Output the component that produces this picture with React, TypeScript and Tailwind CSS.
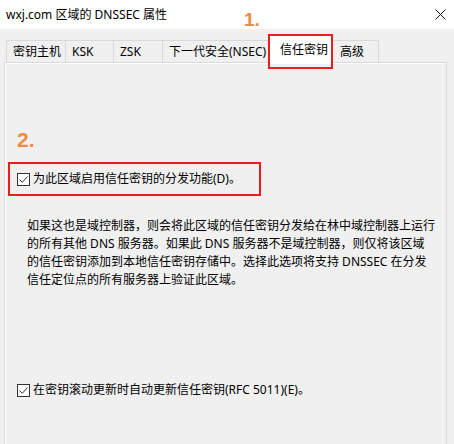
const font = "font-['Noto_Sans','Noto_Sans_CJK_SC',sans-serif]"

function CheckBox() {
  return (
    <span className="flex h-[13px] w-[13px] shrink-0 items-center justify-center border border-[#333] bg-white">
      <svg width="11" height="11" viewBox="0 0 11 11">
        <path d="M1.5 5.5 L4.3 8.3 L9.5 2.5" fill="none" stroke="#333" strokeWidth="1" />
      </svg>
    </span>
  )
}

const tabs = [
  { label: '密钥主机', w: 'w-[59px]' },
  { label: 'KSK', w: 'w-[48px]' },
  { label: 'ZSK', w: 'w-[49px]' },
  { label: '下一代安全(NSEC)', w: 'w-[106px]' },
]

export default function App() {
  return (
    <div className={`relative h-[444px] w-[454px] overflow-hidden bg-[#f0f0f0] text-[12px] text-black ${font}`}>
      {/* title bar */}
      <div className="flex h-[29px] items-center justify-between bg-white pl-[6px] pr-[8px]">
        <span className="leading-[16px]">wxj.com 区域的 DNSSEC 属性</span>
        <svg width="11" height="11" viewBox="0 0 11 11" className="mb-[1px]">
          <path d="M0.5 0.5 L10.5 10.5 M10.5 0.5 L0.5 10.5" stroke="#111" strokeWidth="1" />
        </svg>
      </div>

      {/* tabs */}
      <div className="relative z-10 -mb-px flex items-end pl-[6px] pt-[6px]">
        {tabs.map((t) => (
          <div
            key={t.label}
            className={`mb-px flex h-[22px] items-center whitespace-nowrap border-l border-t border-[#d9d9d9] pl-[6px] leading-[16px] ${t.w}`}
          >
            {t.label}
          </div>
        ))}
        <div className="flex h-[28px] w-[65px] items-start bg-white pl-[12px] pt-[7px] leading-[16px]">
          信任密钥
        </div>
        <div className="mb-px flex h-[22px] w-[46px] items-center border-r border-t border-[#d9d9d9] pl-[7px] leading-[16px]">
          高级
        </div>
      </div>

      {/* page */}
      <div className="ml-[4px] h-[400px] w-[443px] border border-[#d9d9d9]">
        <div className="h-full border-l border-t border-white pt-[98px]">
          <div className="ml-[2px] flex h-[34px] w-[253px] items-center gap-[3px] border-2 border-[#ee1c1c] pl-[7px]">
            <CheckBox />
            <span className="whitespace-nowrap leading-[16px]">为此区域启用信任密钥的分发功能(D)。</span>
          </div>
          <p className="ml-[21px] mt-[21px] whitespace-nowrap leading-[18px]">
            如果这也是域控制器，则会将此区域的信任密钥分发给在林中域控制器上运行
            <br />
            的所有其他 DNS 服务器。如果此 DNS 服务器不是域控制器，则仅将该区域
            <br />
            的信任密钥添加到本地信任密钥存储中。选择此选项将支持 DNSSEC 在分发
            <br />
            信任定位点的所有服务器上验证此区域。
          </p>
          <div className="ml-[11px] mt-[92px] flex h-[18px] items-center gap-[3px]">
            <CheckBox />
            <span className="whitespace-nowrap leading-[16px]">在密钥滚动更新时自动更新信任密钥(RFC 5011)(E)。</span>
          </div>
        </div>
      </div>

      {/* annotations */}
      <div className="absolute left-[268px] top-[34px] z-20 h-[35px] w-[65px] border-2 border-[#ee1c1c]" />
      <span className="absolute left-[244px] top-[8px] z-20 font-['Liberation_Sans',sans-serif] text-[19px] font-bold leading-[24px] text-[#f28b3d]">
        1.
      </span>
      <span className="absolute left-[17px] top-[127px] font-['Liberation_Sans',sans-serif] text-[21px] font-bold leading-[26px] text-[#f28b3d]">
        2.
      </span>
    </div>
  )
}
